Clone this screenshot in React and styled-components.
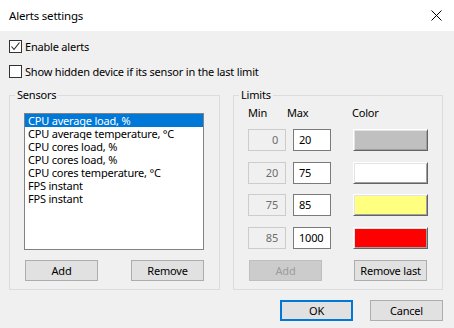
import React from "react";
import styled, { createGlobalStyle } from "styled-components";

const FONT = `"Noto Sans", "Segoe UI", Arial, sans-serif`;

const Global = createGlobalStyle`
  html, body { margin: 0; padding: 0; background: #f0f0f0; }
  body { font-family: ${FONT}; font-size: 11px; letter-spacing: -0.2px; color: #000; }
  * { box-sizing: border-box; }
`;

const Window = styled.div`
  width: 454px;
  height: 328px;
  background: #f0f0f0;
  overflow: hidden;
  display: flex;
  flex-direction: column;
`;

const TitleBar = styled.div`
  height: 31px;
  background: #fff;
  display: flex;
  align-items: center;
  justify-content: space-between;
  padding: 0 12px 1px 9px;
  font-size: 11.5px;
`;

const Main = styled.div`
  display: flex;
  flex-direction: column;
  padding: 7px 11px 0 9px;
`;

const CheckRow = styled.label`
  display: flex;
  align-items: center;
  gap: 3px;
  height: 17px;
  margin-bottom: ${(p) => p.$mb || 0}px;
`;

const Box = styled.span`
  width: 13px;
  height: 13px;
  border: 1px solid #333;
  background: #fff;
  display: flex;
  align-items: center;
  justify-content: center;
`;

const Groups = styled.div`
  display: flex;
  justify-content: space-between;
  height: 202px;
`;

const Group = styled.fieldset`
  margin: 0;
  padding: 0;
  border: 1px solid #dcdcdc;
  width: ${(p) => p.$w}px;
  min-width: 0;
  display: flex;
  flex-direction: column;
`;

const Legend = styled.legend`
  margin-left: 5px;
  padding: 0 2px;
  line-height: 14px;
`;

const GroupBody = styled.div`
  padding: ${(p) => p.$pad};
  display: flex;
  flex-direction: column;
`;

const ListBox = styled.div`
  width: 180px;
  height: 137px;
  border: 1px solid #828282;
  background: #fff;
  padding: 0;
`;

const ListItem = styled.div`
  height: 13px;
  line-height: 13px;
  padding-left: 3px;
  white-space: nowrap;
  overflow: hidden;
  background: ${(p) => (p.$sel ? "#0078d7" : "transparent")};
  color: ${(p) => (p.$sel ? "#fff" : "#000")};
`;

const ButtonRow = styled.div`
  display: flex;
  justify-content: space-between;
  margin-top: ${(p) => p.$mt}px;
  padding: ${(p) => p.$pad || "0"};
`;

const Button = styled.button`
  width: 73px;
  height: 21px;
  padding: 0;
  font-family: ${FONT};
  font-size: 11px;
  letter-spacing: -0.2px;
  color: ${(p) => (p.disabled ? "#9c9c9c" : "#000")};
  background: ${(p) => (p.disabled ? "#cccccc" : "#e1e1e1")};
  border: ${(p) =>
    p.$default ? "2px solid #0078d7" : `1px solid ${p.disabled ? "#bfbfbf" : "#adadad"}`};
  border-radius: 0;
`;

const HeaderRow = styled.div`
  display: flex;
  height: 16px;
  align-items: center;
`;

const HeaderCell = styled.span`
  width: ${(p) => p.$w}px;
`;

const LimitRows = styled.div`
  display: flex;
  flex-direction: column;
  gap: 10.67px;
  margin-top: 9px;
`;

const LimitRow = styled.div`
  display: flex;
  align-items: center;
  height: 22px;
`;

const NumBox = styled.div`
  width: 38px;
  height: 22px;
  line-height: 20px;
  border: 1px solid ${(p) => (p.$disabled ? "#cccccc" : "#7a7a7a")};
  background: ${(p) => (p.$disabled ? "#f0f0f0" : "#fff")};
  color: ${(p) => (p.$disabled ? "#6d6d6d" : "#000")};
  text-align: ${(p) => (p.$disabled ? "right" : "left")};
  padding: ${(p) => (p.$disabled ? "0 7px 0 0" : "0 0 0 5px")};
  margin-right: ${(p) => p.$mr || 0}px;
`;

const ColorBtn = styled.div`
  width: 75px;
  height: 22px;
  border: 1px solid;
  border-color: #ffffff #646464 #646464 #ffffff;
  box-shadow: inset 1px 1px 0 #e3e3e3, inset -1px -1px 0 #a0a0a0;
  background: ${(p) => p.$c};
`;

const Footer = styled.div`
  display: flex;
  justify-content: flex-end;
  gap: 17px;
  margin-top: 10px;
`;

const sensors = [
  "CPU average load, %",
  "CPU average temperature, °C",
  "CPU cores load, %",
  "CPU cores load, %",
  "CPU cores temperature, °C",
  "FPS instant",
  "FPS instant",
];

const limits = [
  { min: "0", max: "20", c: "#c0c0c0" },
  { min: "20", max: "75", c: "#ffffff" },
  { min: "75", max: "85", c: "#ffff80" },
  { min: "85", max: "1000", c: "#ff0000" },
];

export default function App() {
  return (
    <Window>
      <Global />
      <TitleBar>
        <span>Alerts settings</span>
        <svg width="11" height="11" viewBox="0 0 11 11">
          <path d="M0.5 0.5 L10.5 10.5 M10.5 0.5 L0.5 10.5" stroke="#000" strokeWidth="1" />
        </svg>
      </TitleBar>
      <Main>
        <CheckRow $mb={8}>
          <Box>
            <svg width="11" height="11" viewBox="0 0 11 11">
              <path d="M1.5 5.5 L4 8.5 L9.5 1.5" stroke="#222" strokeWidth="1.1" fill="none" />
            </svg>
          </Box>
          <span>Enable alerts</span>
        </CheckRow>
        <CheckRow $mb={8}>
          <Box />
          <span>Show hidden device if its sensor in the last limit</span>
        </CheckRow>
        <Groups>
          <Group $w={211}>
            <Legend>Sensors</Legend>
            <GroupBody $pad="11px 14px 0 14px">
              <ListBox>
                {sensors.map((s, i) => (
                  <ListItem key={i} $sel={i === 0}>
                    {s}
                  </ListItem>
                ))}
              </ListBox>
              <ButtonRow $mt={10} $pad="0 1px 0 1px">
                <Button>Add</Button>
                <Button>Remove</Button>
              </ButtonRow>
            </GroupBody>
          </Group>
          <Group $w={210}>
            <Legend>Limits</Legend>
            <GroupBody $pad="2px 14px 0 14px">
              <HeaderRow>
                <HeaderCell $w={39}>Min</HeaderCell>
                <HeaderCell $w={65}>Max</HeaderCell>
                <HeaderCell $w={40}>Color</HeaderCell>
              </HeaderRow>
              <LimitRows>
                {limits.map((l, i) => (
                  <LimitRow key={i}>
                    <NumBox $disabled $mr={7}>
                      {l.min}
                    </NumBox>
                    <NumBox $mr={22}>{l.max}</NumBox>
                    <ColorBtn $c={l.c} />
                  </LimitRow>
                ))}
              </LimitRows>
              <ButtonRow $mt={11} $pad="0 1px 0 1px">
                <Button disabled>Add</Button>
                <Button>Remove last</Button>
              </ButtonRow>
            </GroupBody>
          </Group>
        </Groups>
        <Footer>
          <Button $default>OK</Button>
          <Button>Cancel</Button>
        </Footer>
      </Main>
    </Window>
  );
}
